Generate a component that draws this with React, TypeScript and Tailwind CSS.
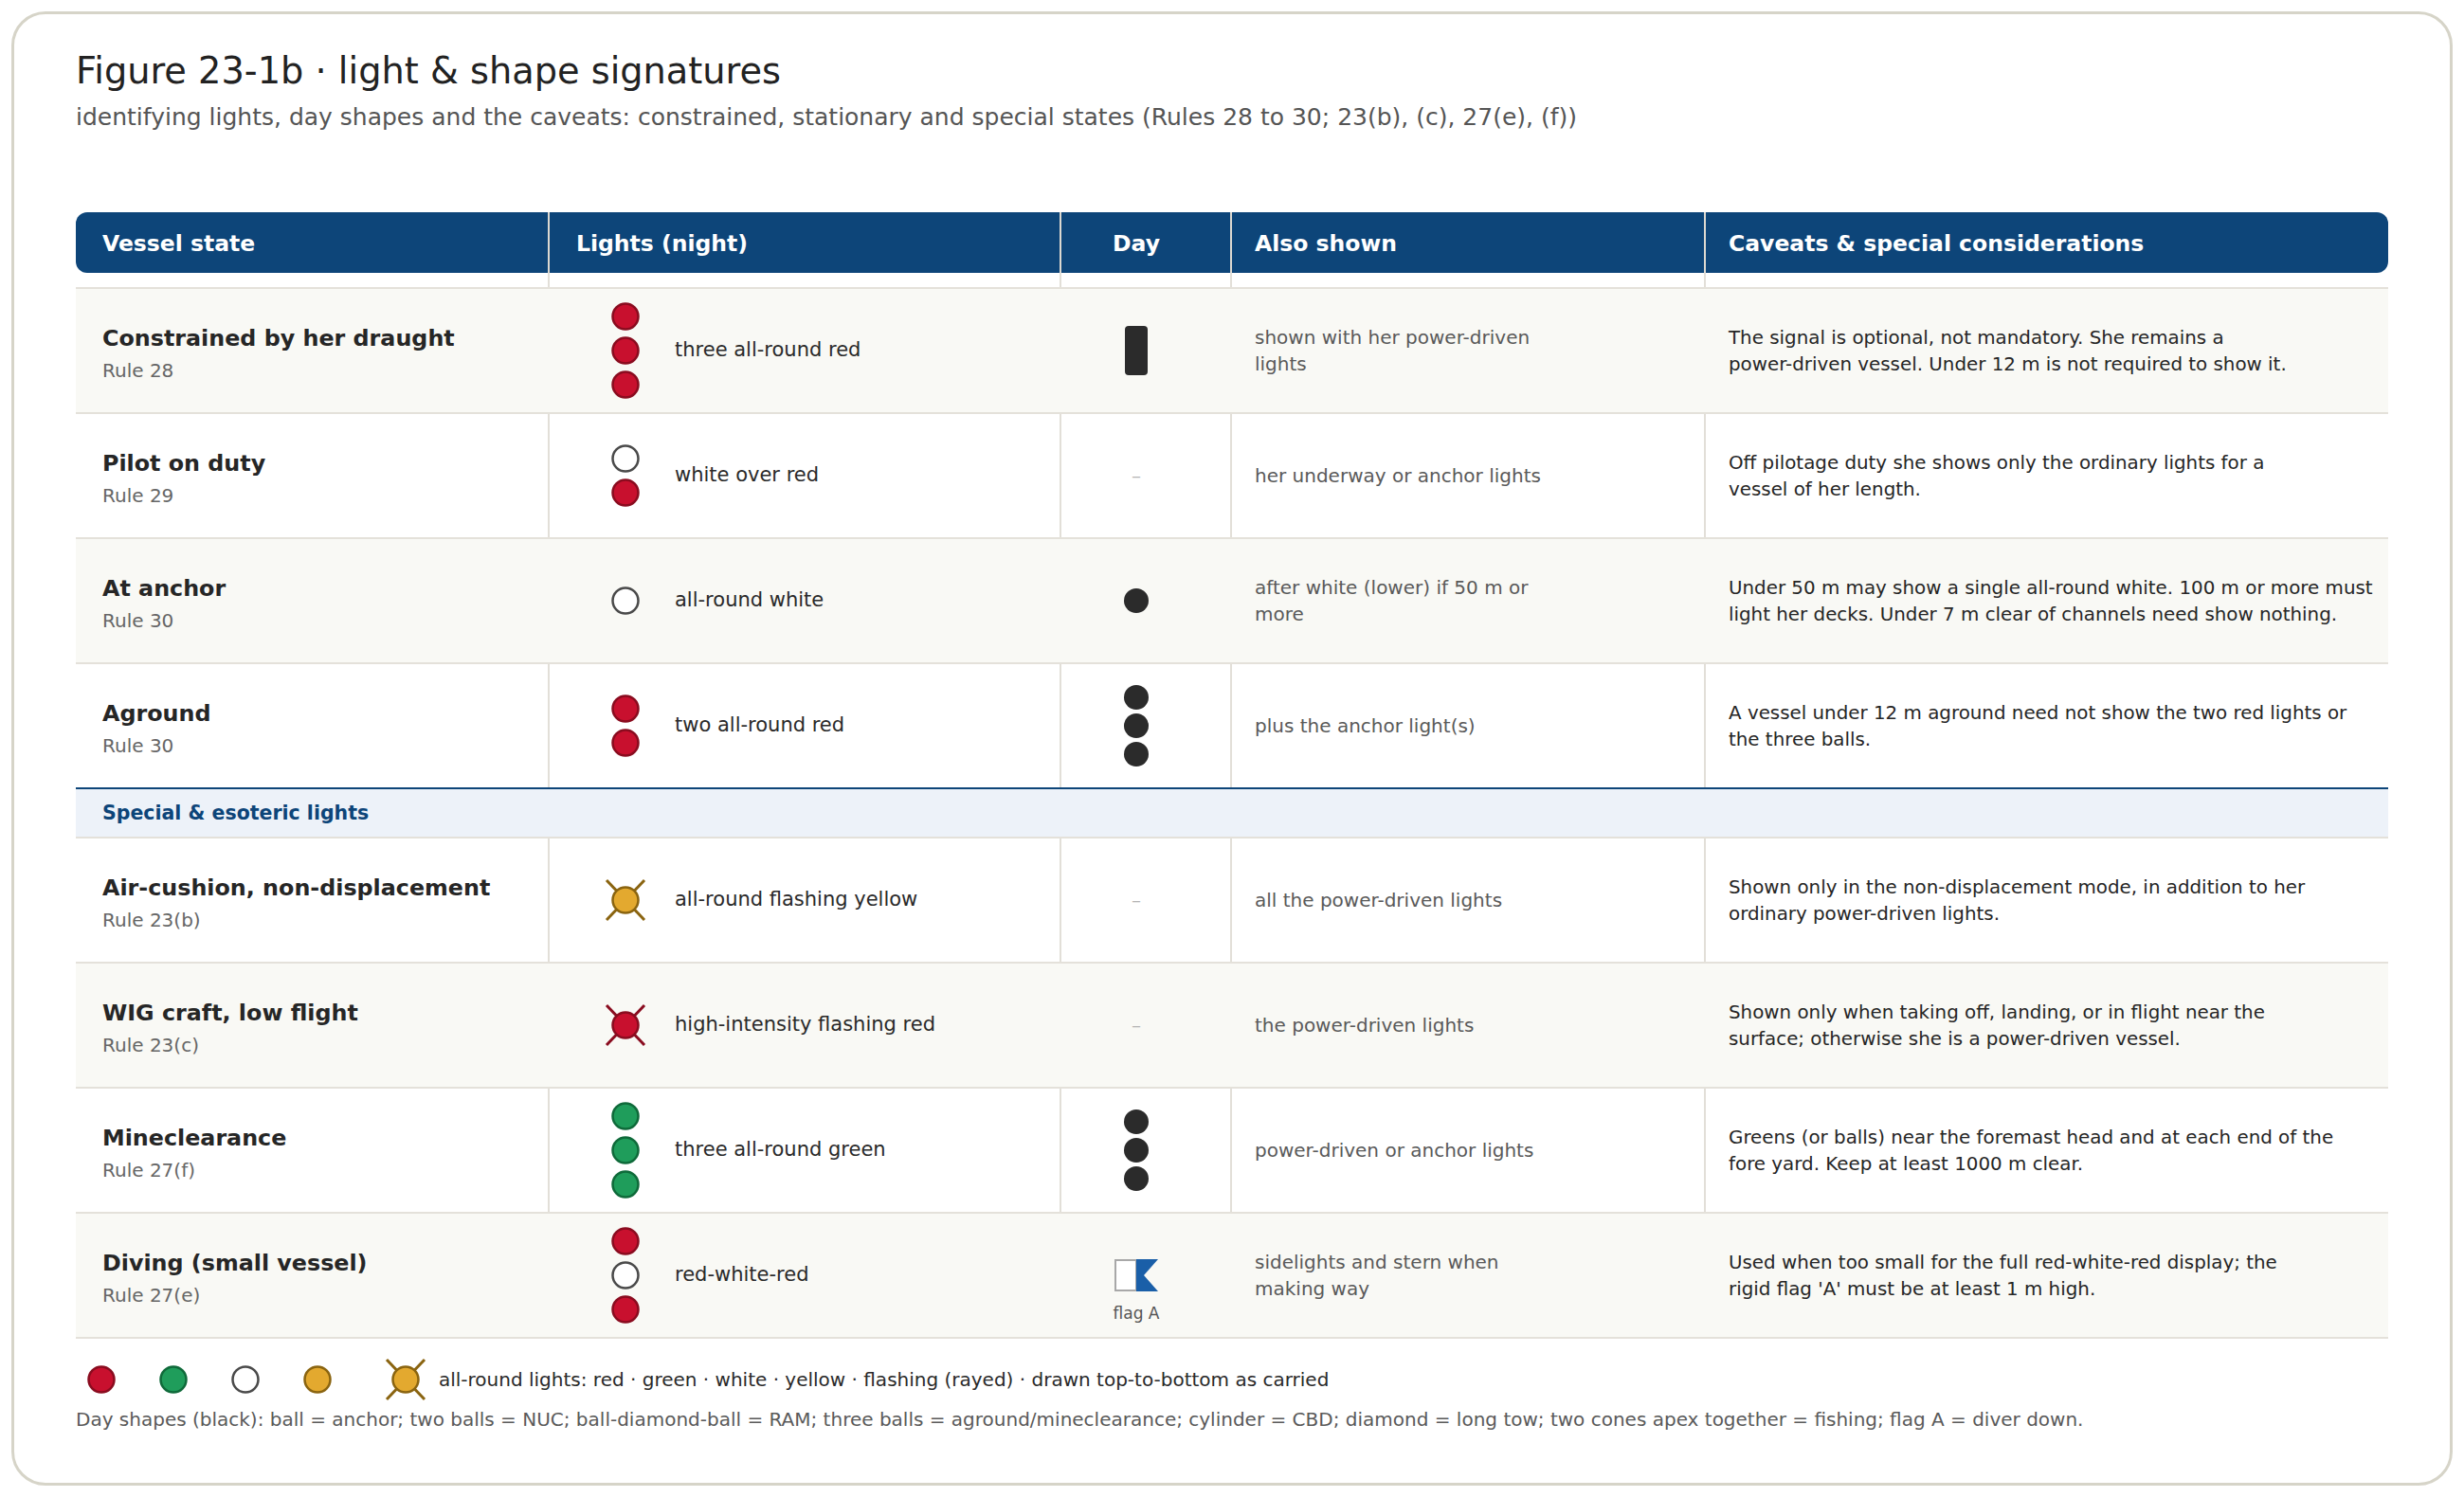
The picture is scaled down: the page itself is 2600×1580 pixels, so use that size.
type Light = "red" | "green" | "white" | "yellow";
type Day = "none" | "cylinder" | "ball" | "three" | "flag";

const LIGHT: Record<Light, { fill: string; stroke: string }> = {
  red: { fill: "#c8102e", stroke: "#8a0c1f" },
  green: { fill: "#1f9d5b", stroke: "#0f6a3a" },
  white: { fill: "#ffffff", stroke: "#4a4a4a" },
  yellow: { fill: "#e3a92f", stroke: "#8a6410" },
};

const rows: {
  name: string;
  rule: string;
  lights: Light[];
  flashing?: boolean;
  lightText: string;
  day: Day;
  also: string[];
  caveat: string[];
  alt: boolean;
}[] = [
  {
    name: "Constrained by her draught",
    rule: "Rule 28",
    lights: ["red", "red", "red"],
    lightText: "three all-round red",
    day: "cylinder",
    also: ["shown with her power-driven", "lights"],
    caveat: [
      "The signal is optional, not mandatory. She remains a",
      "power-driven vessel. Under 12 m is not required to show it.",
    ],
    alt: true,
  },
  {
    name: "Pilot on duty",
    rule: "Rule 29",
    lights: ["white", "red"],
    lightText: "white over red",
    day: "none",
    also: ["her underway or anchor lights"],
    caveat: ["Off pilotage duty she shows only the ordinary lights for a", "vessel of her length."],
    alt: false,
  },
  {
    name: "At anchor",
    rule: "Rule 30",
    lights: ["white"],
    lightText: "all-round white",
    day: "ball",
    also: ["after white (lower) if 50 m or", "more"],
    caveat: [
      "Under 50 m may show a single all-round white. 100 m or more must",
      "light her decks. Under 7 m clear of channels need show nothing.",
    ],
    alt: true,
  },
  {
    name: "Aground",
    rule: "Rule 30",
    lights: ["red", "red"],
    lightText: "two all-round red",
    day: "three",
    also: ["plus the anchor light(s)"],
    caveat: ["A vessel under 12 m aground need not show the two red lights or", "the three balls."],
    alt: false,
  },
];

const special: typeof rows = [
  {
    name: "Air-cushion, non-displacement",
    rule: "Rule 23(b)",
    lights: ["yellow"],
    flashing: true,
    lightText: "all-round flashing yellow",
    day: "none",
    also: ["all the power-driven lights"],
    caveat: ["Shown only in the non-displacement mode, in addition to her", "ordinary power-driven lights."],
    alt: false,
  },
  {
    name: "WIG craft, low flight",
    rule: "Rule 23(c)",
    lights: ["red"],
    flashing: true,
    lightText: "high-intensity flashing red",
    day: "none",
    also: ["the power-driven lights"],
    caveat: ["Shown only when taking off, landing, or in flight near the", "surface; otherwise she is a power-driven vessel."],
    alt: true,
  },
  {
    name: "Mineclearance",
    rule: "Rule 27(f)",
    lights: ["green", "green", "green"],
    lightText: "three all-round green",
    day: "three",
    also: ["power-driven or anchor lights"],
    caveat: ["Greens (or balls) near the foremast head and at each end of the", "fore yard. Keep at least 1000 m clear."],
    alt: false,
  },
  {
    name: "Diving (small vessel)",
    rule: "Rule 27(e)",
    lights: ["red", "white", "red"],
    lightText: "red-white-red",
    day: "flag",
    also: ["sidelights and stern when", "making way"],
    caveat: ["Used when too small for the full red-white-red display; the", "rigid flag 'A' must be at least 1 m high."],
    alt: true,
  },
];

function LightStack({ lights, flashing, width = 84, cx = 52 }: { lights: Light[]; flashing?: boolean; width?: number; cx?: number }) {
  if (flashing) {
    const c = LIGHT[lights[0]];
    return (
      <svg width={width} height="48" viewBox={`0 0 ${width} 48`} className="shrink-0">
        <line x1={cx - 20} y1="3" x2={cx + 20} y2="45" stroke={c.stroke} strokeWidth="3" />
        <line x1={cx + 20} y1="3" x2={cx - 20} y2="45" stroke={c.stroke} strokeWidth="3" />
        <circle cx={cx} cy="24" r="13.5" fill={c.fill} stroke={c.stroke} strokeWidth="2.5" />
      </svg>
    );
  }
  const h = lights.length * 36;
  return (
    <svg width={width} height={h} viewBox={`0 0 ${width} ${h}`} className="shrink-0">
      {lights.map((l, i) => (
        <circle key={i} cx={cx} cy={18 + i * 36} r="13.5" fill={LIGHT[l].fill} stroke={LIGHT[l].stroke} strokeWidth="2.5" />
      ))}
    </svg>
  );
}

function DayShape({ day }: { day: Day }) {
  if (day === "none") return <span className="text-[20px] text-[#b4b4b4]">–</span>;
  if (day === "cylinder")
    return (
      <svg width="24" height="52" viewBox="0 0 24 52">
        <rect x="0" y="0" width="24" height="52" rx="4" fill="#2b2b2b" />
      </svg>
    );
  if (day === "ball")
    return (
      <svg width="28" height="28" viewBox="0 0 28 28">
        <circle cx="14" cy="14" r="13" fill="#2b2b2b" />
      </svg>
    );
  if (day === "three")
    return (
      <svg width="28" height="88" viewBox="0 0 28 88">
        <circle cx="14" cy="14" r="13" fill="#2b2b2b" />
        <circle cx="14" cy="44" r="13" fill="#2b2b2b" />
        <circle cx="14" cy="74" r="13" fill="#2b2b2b" />
      </svg>
    );
  return (
    <div className="mt-[34px] flex flex-col items-center gap-[11px]">
      <svg width="46" height="34" viewBox="0 0 46 34">
        <rect x="1" y="1" width="22" height="32" fill="#ffffff" stroke="#a8a8a8" strokeWidth="2" />
        <polygon points="23,0 46,0 31,17 46,34 23,34" fill="#1a5fa8" />
      </svg>
      <span className="text-[17px] leading-[24px] text-[#555]">flag A</span>
    </div>
  );
}

function Row({ r, first }: { r: (typeof rows)[number]; first?: boolean }) {
  const bg = r.alt ? "bg-[#f9f9f5]" : "bg-white";
  const sep = r.alt ? "border-[#f9f9f5]" : "border-[#e2dfd8]";
  return (
    <div
      className={`grid grid-cols-[500px_540px_180px_500px_720px] border-b-2 border-b-[#e4e1da] ${bg} ${
        first ? "h-[134px] border-t-2 border-t-[#e4e1da]" : "h-[132px]"
      }`}
    >
      <div className={`flex flex-col justify-center border-r-2 pl-[28px] pt-[6px] ${sep}`}>
        <div className="text-[23.8px] font-bold leading-[30px] text-[#262626]">{r.name}</div>
        <div className="mt-[6px] text-[20px] leading-[26px] text-[#666]">{r.rule}</div>
      </div>
      <div className={`flex items-center gap-5 border-r-2 pl-[28px] ${sep}`}>
        <LightStack lights={r.lights} flashing={r.flashing} />
        <span className="text-[21px] text-[#2a2a2a]">{r.lightText}</span>
      </div>
      <div className={`flex items-center justify-center border-r-2 pl-2 pr-7 ${sep}`}>
        <DayShape day={r.day} />
      </div>
      <div className={`flex flex-col justify-center border-r-2 pl-[24px] text-[20px] leading-[28px] text-[#5a5a5a] ${sep}`}>
        {r.also.map((t) => (
          <span key={t} className="block whitespace-nowrap">
            {t}
          </span>
        ))}
      </div>
      <div className="flex flex-col justify-center pl-[24px] pr-[12px] pt-[2px] text-[19.85px] leading-[28px] text-[#262626]">
        {r.caveat.map((t) => (
          <span key={t} className="block whitespace-nowrap">
            {t}
          </span>
        ))}
      </div>
    </div>
  );
}

export default function App() {
  const heads = ["Vessel state", "Lights (night)", "Day", "Also shown", "Caveats & special considerations"];
  return (
    <div className="min-h-screen bg-white p-[12px] font-['DejaVu_Sans',sans-serif]">
      <div className="h-[1556px] rounded-[36px] border-[3px] border-[#d6d4c8] bg-white px-[65px] pt-[37px]">
        <h1 className="text-[38.3px] font-normal leading-[46px] text-[#222]">Figure 23-1b · light &amp; shape signatures</h1>
        <p className="mt-[8px] text-[25px] leading-[35px] text-[#555]">
          identifying lights, day shapes and the caveats: constrained, stationary and special states (Rules 28 to 30; 23(b), (c), 27(e), (f))
        </p>

        <div className="mt-[83px] w-[2440px]">
          {/* header */}
          <div className="grid h-[64px] grid-cols-[500px_540px_180px_500px_720px] text-[23.5px] font-bold text-white">
            {heads.map((h, i) => (
              <div
                key={h}
                className={`flex items-center bg-[#0d4579] pt-[3px] ${i < 4 ? "border-r-2 border-[#dcd8d0]" : ""} ${
                  i === 0 ? "rounded-l-[12px] pl-[28px]" : ""
                } ${i === 1 ? "pl-[28px]" : ""} ${i === 2 ? "justify-center pl-2 pr-7" : ""} ${
                  i === 3 ? "pl-[24px]" : ""
                } ${i === 4 ? "rounded-r-[12px] pl-[24px]" : ""}`}
              >
                {h}
              </div>
            ))}
          </div>
          <div className="grid h-[15px] grid-cols-[500px_540px_180px_500px_720px]">
            <div className="border-r-2 border-[#e2dfd8]" />
            <div className="border-r-2 border-[#e2dfd8]" />
            <div className="border-r-2 border-[#e2dfd8]" />
            <div className="border-r-2 border-[#e2dfd8]" />
            <div />
          </div>

          {rows.map((r, i) => (
            <Row key={r.name} r={r} first={i === 0} />
          ))}
          <div className="-mt-[2px] flex h-[54px] items-center border-b-2 border-t-2 border-b-[#e4e1da] border-t-[#0d4579] bg-[#edf2f9] pl-[28px] text-[20.5px] font-bold text-[#0d4579]">
            Special &amp; esoteric lights
          </div>
          {special.map((r) => (
            <Row key={r.name} r={r} />
          ))}

          {/* legend */}
          <div className="mt-[21px] flex h-[44px] items-center">
            <LightStack lights={["red"]} width={54} cx={27} />
            <div className="ml-[22px]">
              <LightStack lights={["green"]} width={54} cx={27} />
            </div>
            <div className="ml-[22px]">
              <LightStack lights={["white"]} width={54} cx={27} />
            </div>
            <div className="ml-[22px]">
              <LightStack lights={["yellow"]} width={54} cx={27} />
            </div>
            <div className="ml-[36px]">
              <LightStack lights={["yellow"]} flashing width={60} cx={30} />
            </div>
            <span className="ml-[5px] text-[20px] text-[#2a2a2a]">
              all-round lights: red · green · white · yellow · flashing (rayed) · drawn top-to-bottom as carried
            </span>
          </div>
          <p className="mt-[6px] text-[20px] leading-[28px] text-[#5a5a5a]">
            Day shapes (black): ball = anchor; two balls = NUC; ball-diamond-ball = RAM; three balls = aground/mineclearance; cylinder = CBD; diamond = long tow; two cones apex together = fishing; flag A = diver down.
          </p>
        </div>
      </div>
    </div>
  );
}
